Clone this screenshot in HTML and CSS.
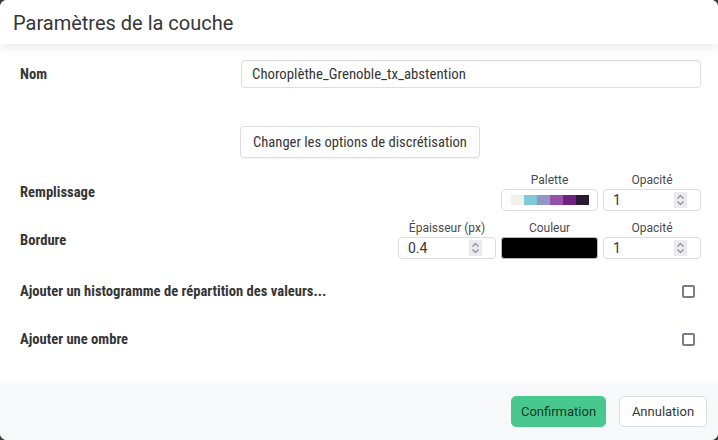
FILE: index.html
```html
<!DOCTYPE html>
<html lang="fr">
<head>
<meta charset="utf-8">
<title>Paramètres de la couche</title>
<link rel="stylesheet" href="styles.css">
</head>
<body>
<div class="modal">
  <header class="head">
    <h1 class="title">Paramètres de la couche</h1>
  </header>
  <section class="content">
    <div class="row row-name">
      <label class="lbl">Nom</label>
      <div class="ctl">
        <div class="text-input">Choroplèthe_Grenoble_tx_abstention</div>
      </div>
    </div>
    <div class="row row-btn">
      <div class="lbl"></div>
      <div class="ctl">
        <button class="btn-disc">Changer les options de discrétisation</button>
      </div>
    </div>
    <div class="row row-fill">
      <label class="lbl">Remplissage</label>
      <div class="ctl ctl-right">
        <div class="field">
          <span class="cap">Palette</span>
          <div class="palette">
            <span class="sw" style="background:#eef0ec"></span>
            <span class="sw" style="background:#80cad8"></span>
            <span class="sw" style="background:#9097c4"></span>
            <span class="sw" style="background:#9452a8"></span>
            <span class="sw" style="background:#73217e"></span>
            <span class="sw" style="background:#2b1a34"></span>
          </div>
        </div>
        <div class="field">
          <span class="cap">Opacité</span>
          <div class="num"><span class="val">1</span><span class="spin"><svg viewBox="0 0 13 16" width="13" height="16"><path d="M3.5 6.5 L6.5 3.5 L9.5 6.5 M3.5 9.5 L6.5 12.5 L9.5 9.5" fill="none" stroke="#8a8a96" stroke-width="1.1"/></svg></span></div>
        </div>
      </div>
    </div>
    <div class="row row-border">
      <label class="lbl">Bordure</label>
      <div class="ctl ctl-right">
        <div class="field">
          <span class="cap">Épaisseur (px)</span>
          <div class="num"><span class="val">0.4</span><span class="spin"><svg viewBox="0 0 13 16" width="13" height="16"><path d="M3.5 6.5 L6.5 3.5 L9.5 6.5 M3.5 9.5 L6.5 12.5 L9.5 9.5" fill="none" stroke="#8a8a96" stroke-width="1.1"/></svg></span></div>
        </div>
        <div class="field">
          <span class="cap">Couleur</span>
          <div class="color"></div>
        </div>
        <div class="field">
          <span class="cap">Opacité</span>
          <div class="num"><span class="val">1</span><span class="spin"><svg viewBox="0 0 13 16" width="13" height="16"><path d="M3.5 6.5 L6.5 3.5 L9.5 6.5 M3.5 9.5 L6.5 12.5 L9.5 9.5" fill="none" stroke="#8a8a96" stroke-width="1.1"/></svg></span></div>
        </div>
      </div>
    </div>
    <div class="row row-check">
      <label class="lbl lbl-wide">Ajouter un histogramme de répartition des valeurs...</label>
      <span class="check"></span>
    </div>
    <div class="row row-check">
      <label class="lbl lbl-wide">Ajouter une ombre</label>
      <span class="check"></span>
    </div>
  </section>
  <footer class="foot">
    <button class="btn btn-ok">Confirmation</button>
    <button class="btn btn-cancel">Annulation</button>
  </footer>
</div>
</body>
</html>
```
FILE: styles.css
```css
* { box-sizing: border-box; }
html, body { margin: 0; padding: 0; }
body {
  width: 718px;
  height: 440px;
  background: #3a3a46;
  font-family: "Roboto", "Liberation Sans", sans-serif;
  color: #363636;
  overflow: hidden;
}
.modal {
  width: 718px;
  height: 440px;
  background: #fff;
  border-radius: 7px;
  display: flex;
  flex-direction: column;
  overflow: hidden;
}
.head {
  height: 44px;
  flex: none;
  padding: 0 13px;
  display: flex;
  align-items: center;
  background: #fff;
  box-shadow: 0 3px 10px rgba(0,0,0,0.09);
  position: relative;
  z-index: 1;
}
.title {
  margin: 0;
  font-size: 20px;
  font-weight: 400;
  color: #363636;
  padding-top: 1px;
}
.content {
  flex: 1;
  padding: 16px 17px 0 20px;
  display: flex;
  flex-direction: column;
}
.row {
  display: flex;
  align-items: center;
}
.lbl {
  width: 221px;
  flex: none;
  font-family: "Roboto Condensed", "Liberation Sans Narrow", "Roboto", sans-serif;
  font-stretch: condensed;
  font-weight: 700;
  font-size: 14.6px;
  line-height: 17px;
  color: #363636;
}
.lbl-wide { width: auto; flex: 1; }
.ctl { flex: 1; display: flex; }
.ctl-right { justify-content: flex-end; gap: 5px; }
.text-input {
  height: 28px;
  width: 100%;
  border: 1px solid #dcdce4;
  border-radius: 4px;
  padding: 0 10px;
  display: flex;
  align-items: center;
  font-family: "Roboto Condensed", "Liberation Sans Narrow", "Roboto", sans-serif;
  font-stretch: condensed;
  font-size: 14.8px;
  color: #363636;
  box-shadow: inset 0 1px 1px rgba(0,0,0,0.03);
}
.row-btn { margin-top: 38px; }
.btn-disc {
  height: 32px;
  margin-left: -1px;
  padding: 0 12px;
  background: #fff;
  border: 1px solid #dcdce4;
  border-radius: 4px;
  font-family: "Roboto Condensed", "Liberation Sans Narrow", "Roboto", sans-serif;
  font-stretch: condensed;
  font-size: 14.6px;
  color: #363636;
  box-shadow: 0 1px 2px rgba(0,0,0,0.06);
}
.row-fill { margin-top: 15px; }
.row-border { margin-top: 10px; }
.field {
  display: flex;
  flex-direction: column;
  align-items: center;
  gap: 2px;
}
.cap {
  font-size: 12px;
  color: #4a4a4a;
  line-height: 14px;
}
.palette {
  width: 97px;
  height: 22px;
  border: 1px solid #dcdce4;
  border-radius: 4px;
  display: flex;
  align-items: center;
  justify-content: center;
}
.sw { width: 13px; height: 10px; display: block; }
.num {
  width: 98px;
  height: 22px;
  border: 1px solid #dcdce4;
  border-radius: 4px;
  display: flex;
  align-items: center;
  justify-content: space-between;
  padding: 0 13px 0 9px;
  font-size: 14px;
  color: #363636;
}
.spin {
  width: 13px;
  height: 16px;
  background: #e9e9ee;
  display: block;
}
.spin svg { display: block; }
.color {
  width: 97px;
  height: 22px;
  background: #000;
  border: 1px solid #b8b8c0;
  border-radius: 3px;
}
.row-check {
  justify-content: space-between;
  padding-right: 6px;
}
.row-border + .row-check { margin-top: 24px; }
.row-check + .row-check { margin-top: 31px; }
.check {
  width: 13px;
  height: 13px;
  border: 2px solid #7c7c8a;
  border-radius: 2px;
  display: block;
}
.foot {
  height: 57px;
  flex: none;
  background: #f7f8fa;
  display: flex;
  justify-content: flex-end;
  align-items: center;
  gap: 13px;
  padding: 0 11px 0 0;
}
.btn {
  height: 31px;
  border-radius: 5px;
  font-family: "Roboto", sans-serif;
  font-size: 13px;
  padding: 0;
}
.btn-ok {
  width: 95px;
  background: #48c78e;
  border: 1px solid #48c78e;
  color: rgba(0,0,0,0.75);
}
.btn-cancel {
  width: 88px;
  background: #fff;
  border: 1px solid #dcdce4;
  color: #363636;
}
```
